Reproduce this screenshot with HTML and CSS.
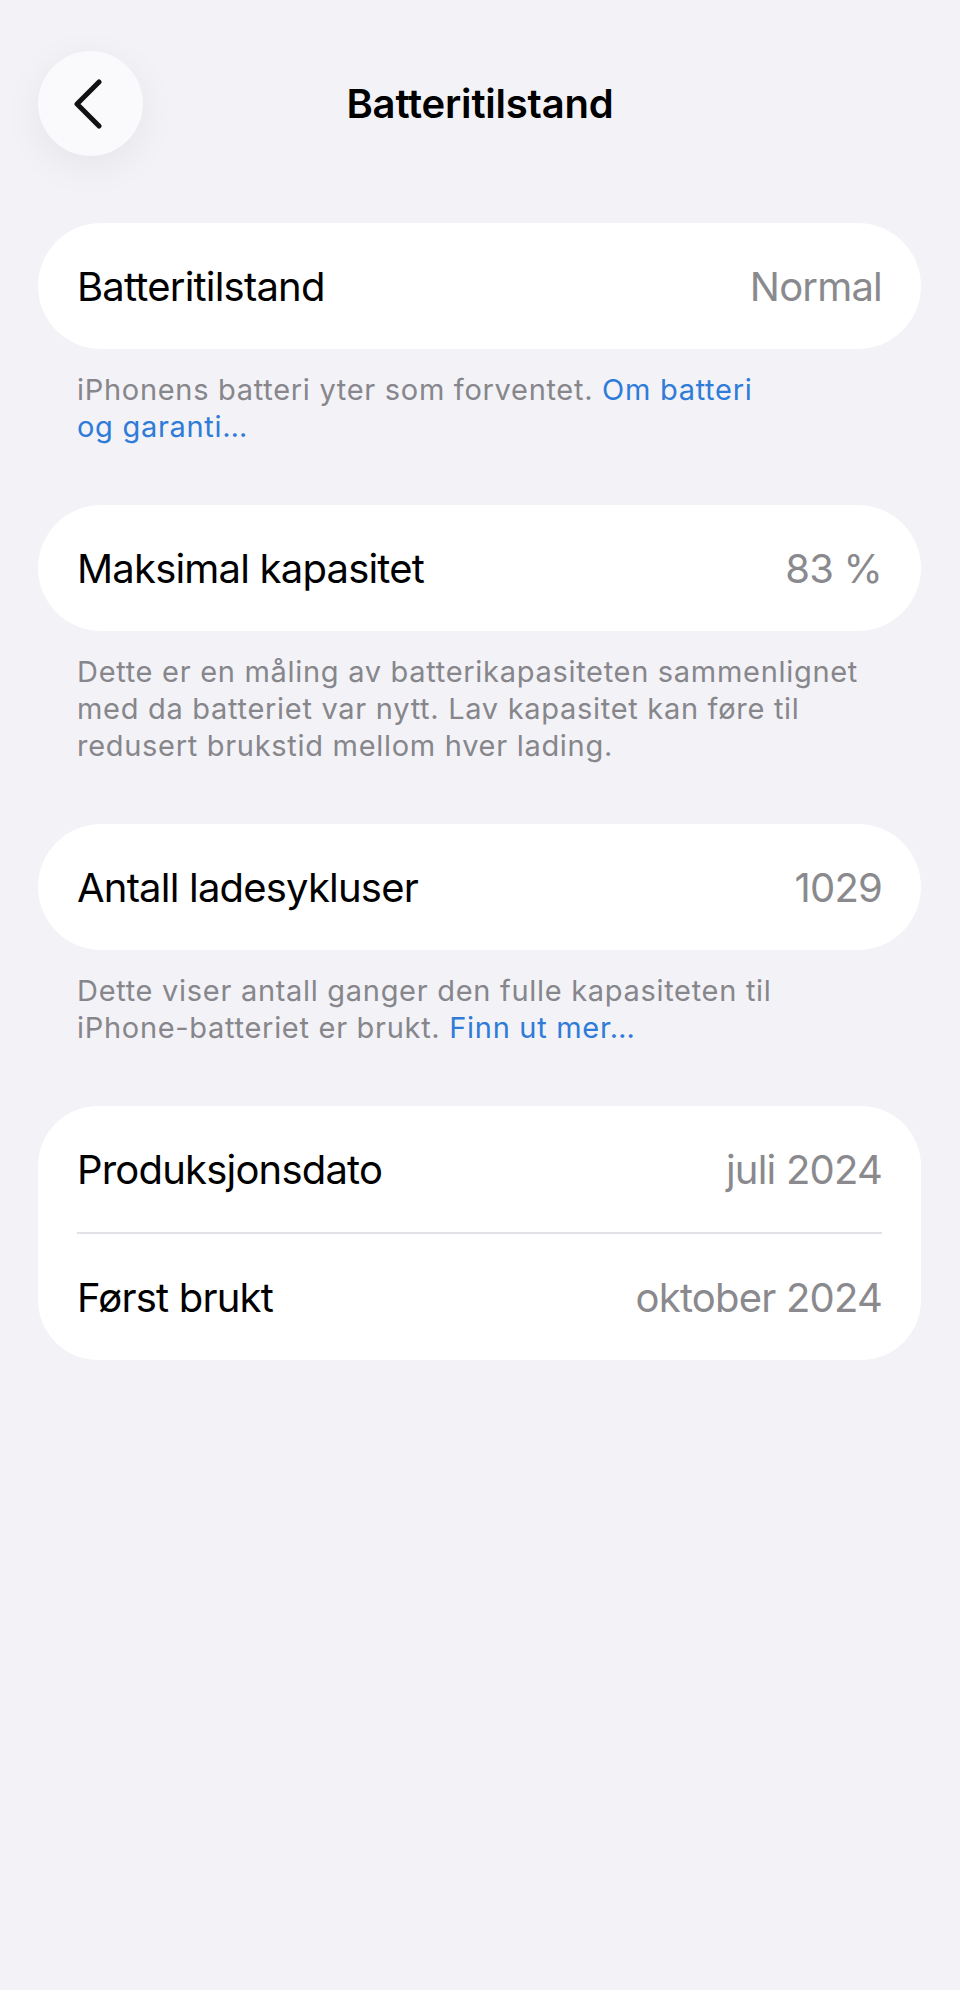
FILE: index.html
```html
<!DOCTYPE html>
<html lang="no">
<head>
    <meta charset="utf-8">
    <link rel="stylesheet" href="styles.css">
</head>
<body>
    <header class="nav">
        <button class="back" aria-label="Tilbake">
            <svg width="30" height="50" viewBox="0 0 30 50">
                <path d="M26 3 L4 25 L26 47" fill="none" stroke="#111" stroke-width="5" stroke-linecap="round" stroke-linejoin="round"/>
            </svg>
        </button>
        <h1 class="title">Batteritilstand</h1>
    </header>

    <main class="content">
        <section class="group">
            <div class="card">
                <div class="row">
                    <span class="label">Batteritilstand</span>
                    <span class="value">Normal</span>
                </div>
            </div>
            <p class="footnote">iPhonens batteri yter som forventet. <a href="#">Om batteri<br>og garanti…</a></p>
        </section>

        <section class="group">
            <div class="card">
                <div class="row">
                    <span class="label">Maksimal kapasitet</span>
                    <span class="value">83 %</span>
                </div>
            </div>
            <p class="footnote">Dette er en måling av batterikapasiteten sammenlignet<br>med da batteriet var nytt. Lav kapasitet kan føre til<br>redusert brukstid mellom hver lading.</p>
        </section>

        <section class="group">
            <div class="card">
                <div class="row">
                    <span class="label">Antall ladesykluser</span>
                    <span class="value">1029</span>
                </div>
            </div>
            <p class="footnote">Dette viser antall ganger den fulle kapasiteten til<br>iPhone-batteriet er brukt. <a href="#">Finn ut mer…</a></p>
        </section>

        <section class="group">
            <div class="card tall">
                <div class="row">
                    <span class="label">Produksjonsdato</span>
                    <span class="value">juli 2024</span>
                </div>
                <div class="divider"></div>
                <div class="row">
                    <span class="label">Først brukt</span>
                    <span class="value">oktober 2024</span>
                </div>
            </div>
        </section>
    </main>
</body>
</html>
```

FILE: styles.css
```css
body {
    margin: 0;
    background-color: #f2f2f7;
    font-family: Inter, "Noto Sans", "Liberation Sans", sans-serif;
    color: #000;
}

.nav {
    position: relative;
    height: 223px;
    padding-top: 51px;
    box-sizing: border-box;
}

.back {
    margin-left: 38px;
    width: 105px;
    height: 105px;
    border: none;
    border-radius: 50%;
    background-color: #fafafc;
    box-shadow: 0 10px 40px rgba(0, 0, 0, 0.06);
    display: flex;
    align-items: center;
    justify-content: center;
    padding: 0 6px 0 0;
}

.title {
    position: absolute;
    left: 0;
    right: 0;
    top: 51px;
    height: 105px;
    margin: 0;
    display: flex;
    align-items: center;
    justify-content: center;
    font-size: 40px;
    font-weight: 600;
    letter-spacing: -0.2px;
    pointer-events: none;
}

.content {
    padding: 0 39px 0 38px;
}

.group {
    margin-bottom: 60px;
}

.card {
    background-color: #fff;
    border-radius: 63px;
}

.card.tall {
    border-radius: 60px;
}

.row {
    height: 126px;
    padding: 0 39px;
    display: flex;
    justify-content: space-between;
    align-items: center;
    font-size: 40px;
    letter-spacing: -0.8px;
}

.value {
    color: #8a8a8e;
}

.divider {
    height: 2px;
    margin: 0 39px;
    background-color: #e2e2e6;
}

.footnote {
    margin: 22px 0 0;
    padding: 0 39px;
    font-size: 29px;
    line-height: 37px;
    letter-spacing: 0.7px;
    color: #86868b;
}

.footnote a {
    color: #2f7bd8;
    text-decoration: none;
}
```
